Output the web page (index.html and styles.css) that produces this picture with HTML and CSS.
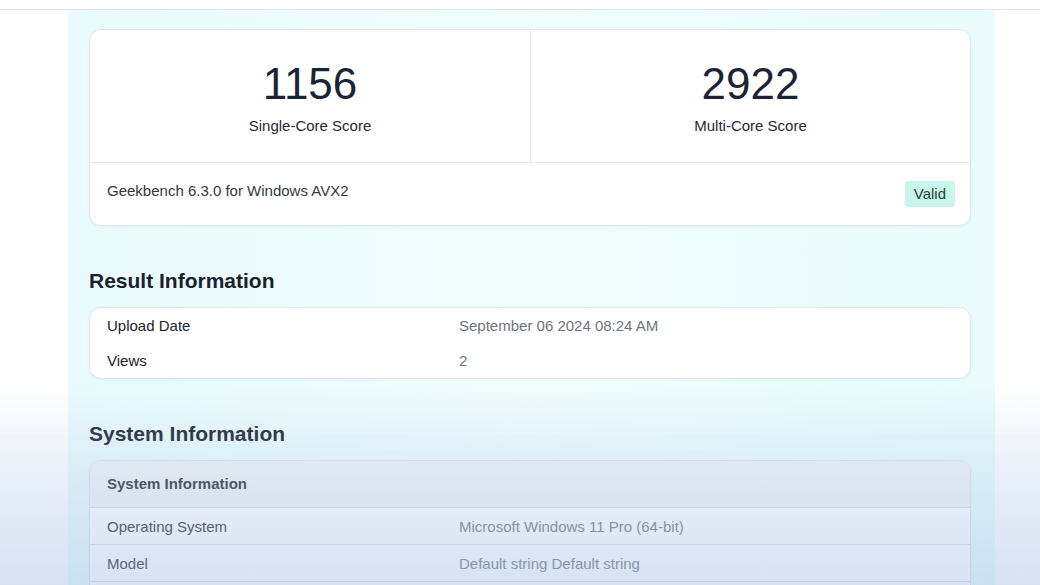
FILE: index.html
```html
<!DOCTYPE html>
<html lang="en">
<head>
<meta charset="utf-8">
<title>Geekbench Result</title>
<link rel="stylesheet" href="styles.css">
</head>
<body>
<div class="topbar"></div>
<main class="page">
  <section class="card score-card">
    <div class="scores">
      <div class="score">
        <div class="score-value">1156</div>
        <div class="score-label">Single-Core Score</div>
      </div>
      <div class="score">
        <div class="score-value">2922</div>
        <div class="score-label">Multi-Core Score</div>
      </div>
    </div>
    <div class="score-footer">
      <span class="version">Geekbench 6.3.0 for Windows AVX2</span>
      <span class="badge">Valid</span>
    </div>
  </section>

  <h2 class="section-title">Result Information</h2>
  <section class="card info-card">
    <div class="row"><span class="label">Upload Date</span><span class="value">September 06 2024 08:24 AM</span></div>
    <div class="row"><span class="label">Views</span><span class="value">2</span></div>
  </section>

  <h2 class="section-title">System Information</h2>
  <section class="card info-card sys-card">
    <div class="sys-head">System Information</div>
    <div class="row lined"><span class="label">Operating System</span><span class="value">Microsoft Windows 11 Pro (64-bit)</span></div>
    <div class="row lined"><span class="label">Model</span><span class="value">Default string Default string</span></div>
    <div class="row lined empty"></div>
  </section>
</main>
<div class="tint"></div>
</body>
</html>
```

FILE: styles.css
```css
html, body {
  margin: 0;
  padding: 0;
}
body {
  background: #ffffff;
  font-family: "Liberation Sans", Arial, sans-serif;
  color: #1f2733;
  overflow: hidden;
  height: 585px;
}
.topbar {
  height: 9px;
  background: #ffffff;
  border-bottom: 1px solid #e2e6ea;
}
.page {
  margin-left: 68px;
  width: 927px;
  box-sizing: border-box;
  padding: 19px 24px 40px 21px;
  background: linear-gradient(to right, #eafbfd 0%, #f0fdfd 50%, #eafcfd 100%);
  min-height: 600px;
}
.card {
  background: #ffffff;
  border: 1px solid #dfe7ec;
  border-radius: 12px;
  box-shadow: 0 1px 3px rgba(30, 60, 80, 0.06);
}
.scores {
  display: grid;
  grid-template-columns: 1fr 1fr;
  border-bottom: 1px solid #e6ecef;
}
.score {
  display: flex;
  flex-direction: column;
  align-items: center;
  padding: 29px 0 26px;
}
.score + .score {
  border-left: 1px solid #e6ecef;
}
.score-value {
  font-size: 44px;
  line-height: 50px;
  color: #1b2436;
}
.score-label {
  margin-top: 7px;
  font-size: 15px;
  line-height: 20px;
  color: #1f2937;
}
.score-footer {
  display: flex;
  justify-content: space-between;
  align-items: flex-start;
  padding: 18px 15px 18px 17px;
}
.version {
  font-size: 15px;
  line-height: 20px;
  color: #333a44;
}
.badge {
  display: inline-block;
  height: 26px;
  line-height: 26px;
  padding: 0 9px;
  border-radius: 3px;
  background: #c9f5ea;
  color: #23403a;
  font-size: 15px;
}
.section-title {
  margin: 43px 0 14px;
  font-size: 21px;
  line-height: 24px;
  font-weight: bold;
  color: #19212e;
}
.row {
  display: grid;
  grid-template-columns: 352px 1fr;
  padding: 0 17px;
  height: 35px;
  align-items: center;
  font-size: 15px;
}
.label {
  color: #1c2330;
}
.value {
  color: #6d7480;
}
.sys-card {
  overflow: hidden;
}
.sys-head {
  height: 46px;
  line-height: 46px;
  padding: 0 17px;
  font-size: 15px;
  font-weight: bold;
  color: #1c2330;
  background: #f1f4f7;
}
.row.lined {
  border-top: 1px solid #d9e0e6;
  height: 36px;
}
.tint {
  position: fixed;
  left: 0;
  top: 0;
  width: 100%;
  height: 100%;
  pointer-events: none;
  background: linear-gradient(to bottom, rgba(175, 200, 232, 0) 0px, rgba(175, 200, 232, 0) 385px, rgba(175, 200, 232, 0.3) 480px, rgba(165, 192, 228, 0.45) 585px);
}
```
